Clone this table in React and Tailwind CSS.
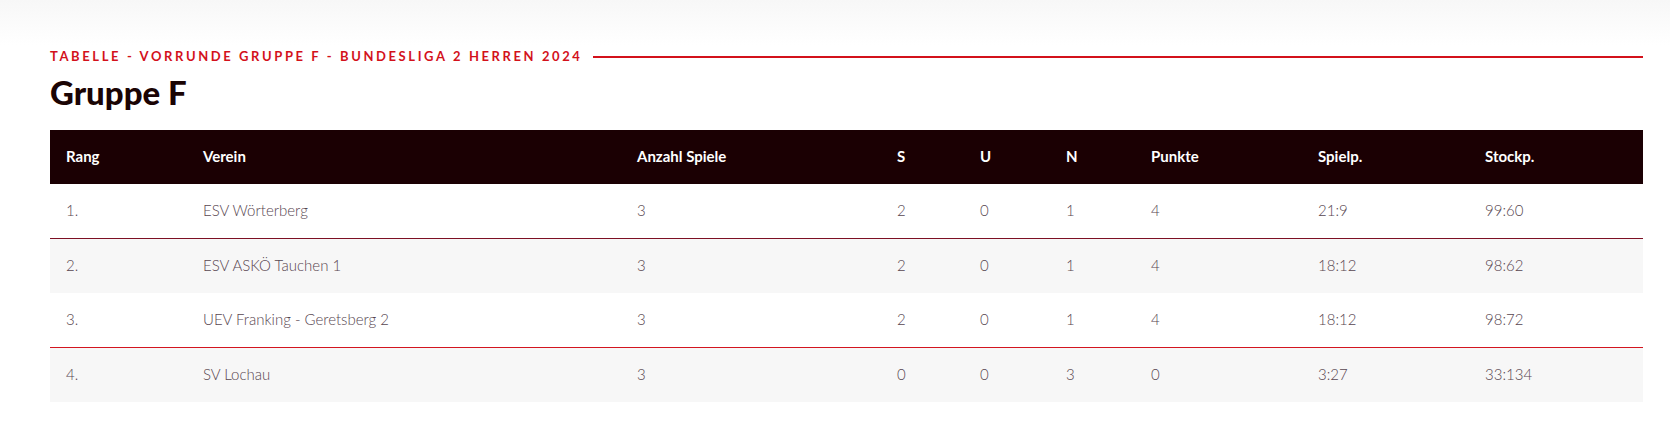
import React from "react";

const rows = [
  { rang: "1.", verein: "ESV Wörterberg", spiele: "3", s: "2", u: "0", n: "1", punkte: "4", spielp: "21:9", stockp: "99:60" },
  { rang: "2.", verein: "ESV ASKÖ Tauchen 1", spiele: "3", s: "2", u: "0", n: "1", punkte: "4", spielp: "18:12", stockp: "98:62" },
  { rang: "3.", verein: "UEV Franking - Geretsberg 2", spiele: "3", s: "2", u: "0", n: "1", punkte: "4", spielp: "18:12", stockp: "98:72" },
  { rang: "4.", verein: "SV Lochau", spiele: "3", s: "0", u: "0", n: "3", punkte: "0", spielp: "3:27", stockp: "33:134" },
];

const cols = ["Rang", "Verein", "Anzahl Spiele", "S", "U", "N", "Punkte", "Spielp.", "Stockp."];
const widths = ["w-[137px]", "w-[434px]", "w-[260px]", "w-[83px]", "w-[86px]", "w-[85px]", "w-[167px]", "w-[167px]", "w-[174px]"];

function rowClass(i) {
  if (i === 0) return "border-b border-[#7d1024] bg-white";
  if (i === 1) return "bg-[#f7f7f7]";
  if (i === 2) return "border-b border-[#d3151f] bg-white";
  return "bg-[#f7f7f7]";
}

export default function App() {
  return (
    <div className="min-h-[429px] w-full bg-[linear-gradient(#f7f7f7,#ffffff_45px)] font-['Lato','Liberation_Sans',sans-serif]">
      <div className="px-[50px] pt-[47px] pr-[27px]">
        <div className="flex items-center gap-[10px]">
          <span className="text-[13px] font-bold uppercase tracking-[0.2em] text-[#d3111b] whitespace-nowrap">
            Tabelle - Vorrunde Gruppe F - Bundesliga 2 Herren 2024
          </span>
          <div className="h-[2px] flex-1 bg-[#d3111b]" />
        </div>
        <h2 className="mt-[6px] text-[33px] font-black leading-[38px] text-[#1a0404]">Gruppe F</h2>
        <table className="mt-[19px] w-[1593px] table-fixed border-collapse">
          <thead>
            <tr className="h-[54px] bg-[#1b0003] text-white">
              {cols.map((c, i) => (
                <th key={c} className={`${widths[i]} px-4 text-left text-[15px] font-bold`}>
                  {c}
                </th>
              ))}
            </tr>
          </thead>
          <tbody>
            {rows.map((r, i) => (
              <tr key={r.rang} className={`h-[54.5px] text-[15px] font-light text-[#574650] ${rowClass(i)}`}>
                <td className="px-4">{r.rang}</td>
                <td className="px-4">{r.verein}</td>
                <td className="px-4">{r.spiele}</td>
                <td className="px-4">{r.s}</td>
                <td className="px-4">{r.u}</td>
                <td className="px-4">{r.n}</td>
                <td className="px-4">{r.punkte}</td>
                <td className="px-4">{r.spielp}</td>
                <td className="px-4">{r.stockp}</td>
              </tr>
            ))}
          </tbody>
        </table>
      </div>
    </div>
  );
}
